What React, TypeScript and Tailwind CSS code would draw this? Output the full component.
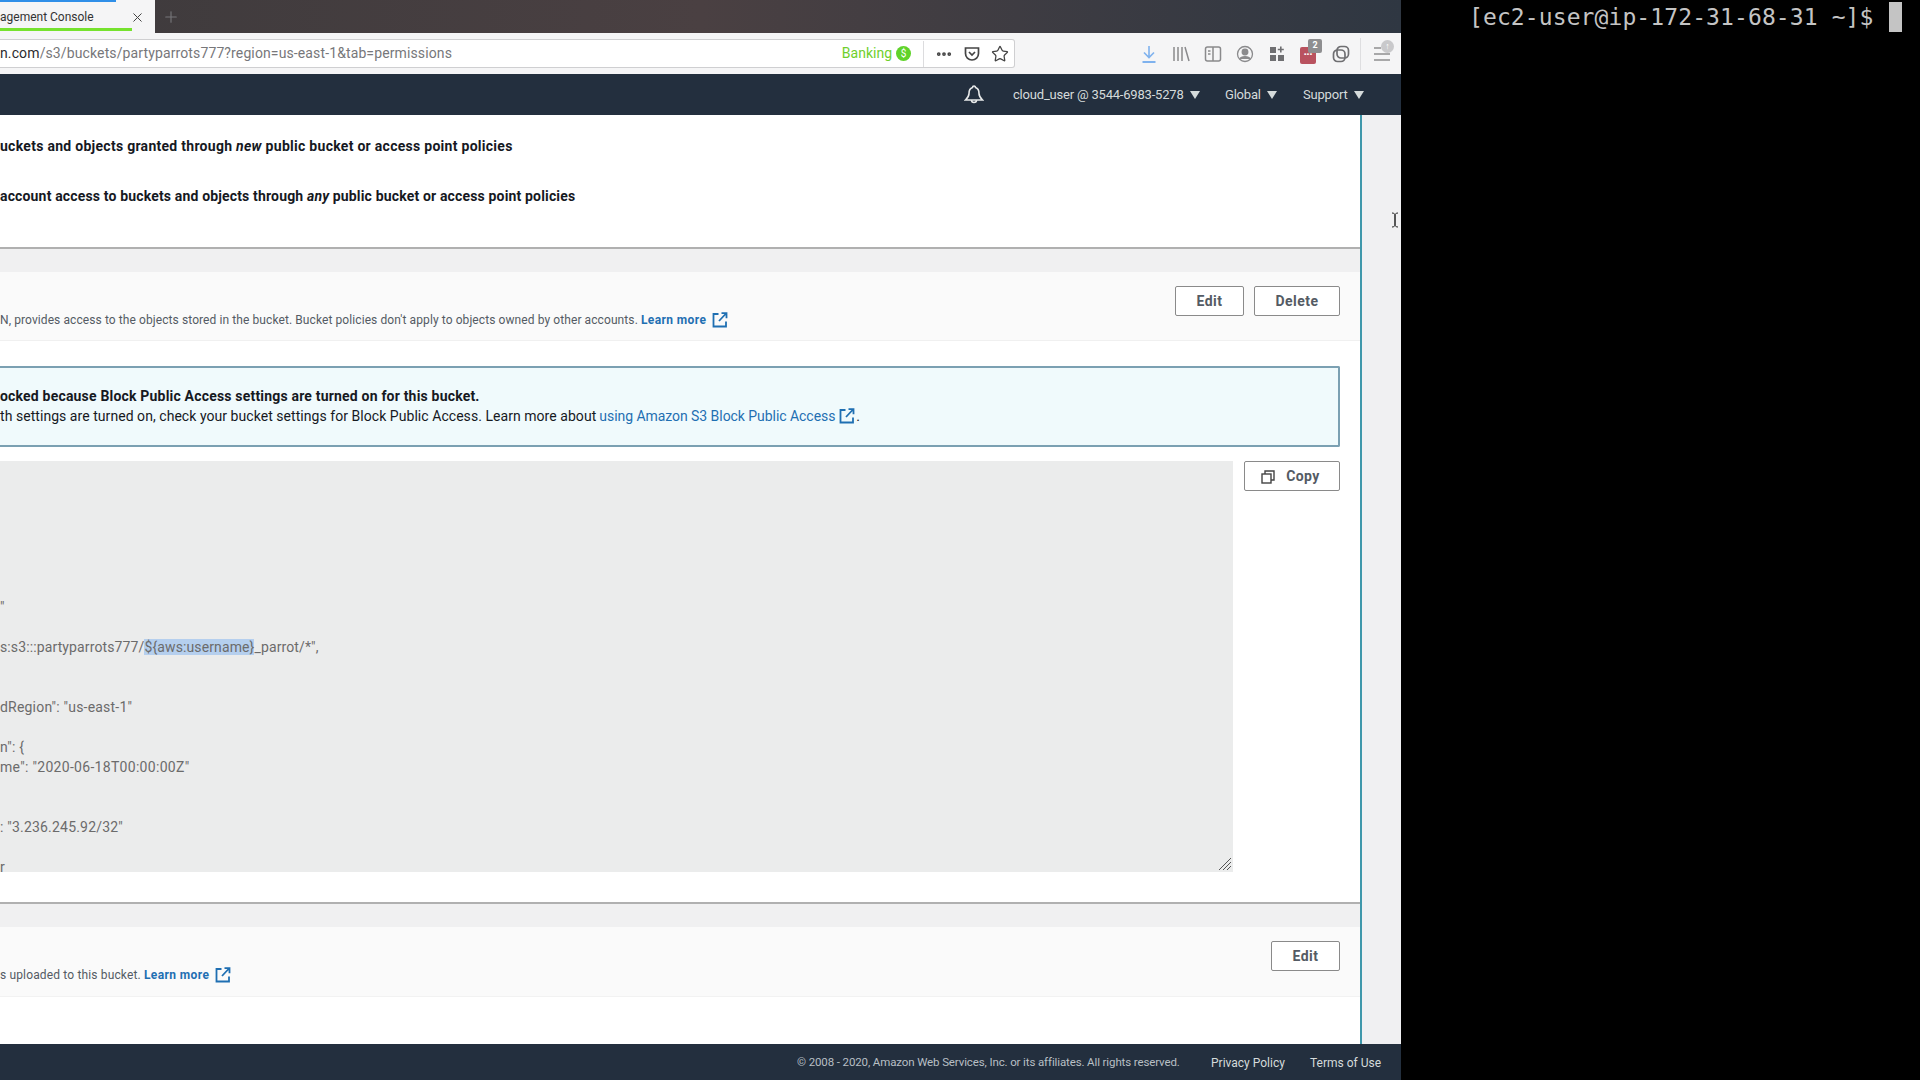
import { Plus, X, Star, Ellipsis } from 'lucide-react'

const codeLines: { [k: number]: JSX.Element | string } = {
  6: '"',
  8: (
    <span className="tracking-[0.12px]">
      s:s3:::partyparrots777/<span className="bg-[#b5cfee]">{'${aws:username}'}</span>_parrot/*",
    </span>
  ),
  11: 'dRegion": "us-east-1"',
  13: 'n": {',
  14: <span className="tracking-[0.3px]">me&quot;: &quot;2020-06-18T00:00:00Z&quot;</span>,
  17: ': "3.236.245.92/32"',
  19: 'r',
}

function OutlineButton({ label, width }: { label: string; width: string }): JSX.Element {
  return (
    <button className={`${width} h-[30px] pt-[1px] bg-white border border-[#8a8a8a] rounded-[2px] text-[14px] font-bold tracking-[0.5px] text-[#545b64]`}>
      {label}
    </button>
  )
}

function ExtLink({ className }: { className: string }): JSX.Element {
  return (
    <svg width="16" height="16" viewBox="0 0 16 16" fill="none" stroke="#1f6fb2" strokeWidth="1.8" className={className}>
      <path d="M6.500 2H1.500v12.500H14V9.500" />
      <path d="M7 9l7-7.500M9.500 1.200h5v5" />
    </svg>
  )
}

function Caret({ className }: { className: string }): JSX.Element {
  return <span className={`${className} w-0 h-0 border-x-[5px] border-x-transparent border-t-[8px] border-t-[#d5dbdb]`} />
}

function ToolbarIcons(): JSX.Element {
  return (
    <div className="ml-[124px] flex items-center text-[#8a8a8c]">
      <div className="flex items-center gap-[12px]">
        <svg width="20" height="20" viewBox="0 0 20 20" fill="none" stroke="#7fb2ee" strokeWidth="1.6">
          <path d="M10 2v11M5 8.500l5 5 5-5" />
          <path d="M3.500 18h13" strokeWidth="2" />
        </svg>
        <svg width="20" height="20" viewBox="0 0 20 20" fill="none" stroke="currentColor" strokeWidth="1.5">
          <path d="M3 3v14M7 3v14M11 3v14M14 3l4 14" />
        </svg>
        <svg width="20" height="20" viewBox="0 0 20 20" fill="none" stroke="currentColor" strokeWidth="1.5">
          <rect x="2.500" y="3" width="15" height="14" rx="2" />
          <path d="M10 3v14M5 7h2.500M5 10h2.500" />
        </svg>
        <svg width="20" height="20" viewBox="0 0 20 20" fill="none" stroke="currentColor" strokeWidth="1.3">
          <circle cx="10" cy="10" r="7.500" />
          <circle cx="10" cy="8" r="2.800" fill="currentColor" />
          <path d="M5 15c1-3 9-3 10 0" fill="currentColor" />
        </svg>
        <svg width="20" height="20" viewBox="0 0 20 20" fill="#6f6f72">
          <rect x="3" y="3" width="6" height="6" />
          <rect x="3" y="11" width="6" height="6" />
          <rect x="11" y="11" width="6" height="6" />
          <path d="M13 2.500h1.600v2.200h2.200v1.600h-2.200v2.200H13V6.300h-2.200V4.700H13z" />
        </svg>
        <div className="relative w-[20px] h-[20px]">
          <div className="absolute left-[1px] top-[3px] w-[16px] h-[17px] bg-[#b9525f] rounded-[2px] flex items-center justify-center text-[8px] font-bold leading-none text-white">
            •••
          </div>
          <div className="absolute left-[9px] top-[-5px] w-[14px] h-[14px] bg-[#8e8e90] rounded-[2px] flex items-center justify-center text-[9px] font-bold text-white">
            2
          </div>
        </div>
        <svg width="20" height="20" viewBox="0 0 20 20" fill="none" stroke="#6f6f72" strokeWidth="1.7">
          <rect x="6" y="2.500" width="11.500" height="11.500" rx="4" />
          <rect x="2.500" y="6" width="11.500" height="11.500" rx="4" />
        </svg>
      </div>
      <div className="ml-[9px] w-px h-[32px] bg-[#dedee0]" />
      <div className="relative ml-[11px] w-[20px] h-[20px]">
        <svg width="20" height="20" viewBox="0 0 20 20" fill="none" stroke="#8e8e90" strokeWidth="1.6">
          <path d="M2 4h7M2 10h16M2 16h16" />
        </svg>
        <span className="absolute left-[9px] top-[-4px] w-[13px] h-[13px] rounded-full bg-[#c9c9cb] flex items-center justify-center text-[9px] leading-none text-white">
          ↑
        </span>
      </div>
    </div>
  )
}

export default function App(): JSX.Element {
  return (
    <div className="w-[1920px] h-[1080px] flex overflow-hidden bg-black font-['Roboto',sans-serif]">
      <div className="relative w-[1401px] h-full flex flex-col overflow-hidden">
        {/* tab strip */}
        <div className="h-[33px] shrink-0 flex bg-linear-to-r from-[#3d3a3c] via-[#4a4042] to-[#2f3742]">
          <div className="relative w-[155px] h-full bg-[#f5f5f6] flex items-center">
            <div className="absolute left-0 top-0 w-[116px] h-[2px] bg-[#2f8fe8]" />
            <span className="text-[12px] text-[#333] mt-[1px]">agement Console</span>
            <X size={15} strokeWidth={1.6} className="absolute left-[130px] top-[10px] text-[#444]" />
            <div className="absolute left-0 bottom-[2px] w-[132px] h-[3px] bg-[#76e22e]" />
          </div>
          <Plus size={18} strokeWidth={1.5} className="ml-[7px] mt-[8px] text-[#77777a]" />
        </div>

        {/* url bar */}
        <div className="h-[41px] shrink-0 flex items-center bg-[#f5f5f6]">
          <div className="w-[1015px] h-[29px] shrink-0 flex items-center bg-white border border-l-0 border-[#cfcfd1] rounded-r-[3px]">
            <span className="flex-1 text-[14px] tracking-[0.12px] whitespace-nowrap text-[#77777a]">
              <span className="text-[#2c2c2e]">n.com</span>/s3/buckets/partyparrots777?region=us-east-1&amp;tab=permissions
            </span>
            <span className="text-[14px] text-[#6fcf2c]">Banking</span>
            <span className="ml-[4px] w-[15px] h-[15px] rounded-full bg-[#5fd32a] flex items-center justify-center text-[10px] text-white">
              $
            </span>
            <div className="ml-[12px] w-px h-[26px] bg-[#dcdcde]" />
            <Ellipsis size={18} strokeWidth={3} className="ml-[11px] text-[#444]" />
            <svg width="18" height="18" viewBox="0 0 18 18" fill="none" stroke="#444" strokeWidth="1.7" className="ml-[10px]">
              <path d="M2.500 3h13v5.500a6.500 6.500 0 0 1-13 0z" />
              <path d="M6 7l3 3 3-3" />
            </svg>
            <Star size={18} strokeWidth={1.7} className="ml-[10px] mr-[5px] text-[#444]" />
          </div>
          <ToolbarIcons />
        </div>

        {/* console nav */}
        <div className="h-[41px] shrink-0 flex items-center bg-[#232f3e] text-[#d5dbdb] text-[13px] tracking-[-0.2px]">
          <svg width="20" height="22" viewBox="0 0 20 22" fill="none" stroke="#e8eaea" strokeWidth="1.6" className="ml-[964px]">
            <path d="M10 2C9 2 8.500 2.700 8.500 3.500 5.500 4.500 5 7 5 9.500c0 3-2 5-3.500 6.500h17C17 14.500 15 12.500 15 9.500 15 7 14.500 4.500 11.500 3.500 11.500 2.700 11 2 10 2z" />
            <path d="M7.500 16a2.500 2.500 0 0 0 5 0" />
          </svg>
          <span className="ml-[29px] w-[170px] whitespace-nowrap">cloud_user @ 3544-6983-5278</span>
          <Caret className="ml-[7px]" />
          <span className="ml-[25px] w-[36px]">Global</span>
          <Caret className="ml-[6px]" />
          <span className="ml-[26px] w-[46px]">Support</span>
          <Caret className="ml-[5px]" />
        </div>

        {/* page body */}
        <div className="flex-1 min-h-0 flex">
          <div className="w-[1360px] flex flex-col bg-white">
            <div className="h-[132px] shrink-0 pt-[21px] flex flex-col gap-[30px] text-[14px] leading-[20px] font-bold text-[#16191f] whitespace-nowrap">
              <p className="tracking-[0.28px]">uckets and objects granted through <em>new</em> public bucket or access point policies</p>
              <p className="tracking-[0.16px]">account access to buckets and objects through <em>any</em> public bucket or access point policies</p>
            </div>

            <div className="h-[25px] shrink-0 bg-[#f0f0f1] border-t-2 border-[#b0b0b0]" />
            <div className="h-[69px] shrink-0 flex justify-between bg-[#fafafa] border-b border-[#f0f0f0] pr-[20px]">
              <p className="self-end pb-[10px] flex items-center text-[12px] leading-[20px] tracking-[0.09px] text-[#545b64] whitespace-nowrap">
                N, provides access to the objects stored in the bucket. Bucket policies don&apos;t apply to objects owned by other accounts.
                <span className="ml-[3px] font-bold tracking-[0.4px] text-[#1f6fb2]">Learn more</span>
                <ExtLink className="ml-[6px]" />
              </p>
              <div className="pt-[14px] flex gap-[10px]">
                <OutlineButton label="Edit" width="w-[69px]" />
                <OutlineButton label="Delete" width="w-[86px]" />
              </div>
            </div>

            <div className="mt-[25px] mr-[20px] h-[81px] shrink-0 pt-[20px] bg-[#f0fafc] border-y-2 border-r-2 border-[#7ba0b2] rounded-r-[2px] text-[14px] leading-[20px] text-[#16191f] whitespace-nowrap">
              <p className="-mt-[2px] font-bold tracking-[0.19px]">ocked because Block Public Access settings are turned on for this bucket.</p>
              <p className="flex items-center tracking-[0.05px]">
                th settings are turned on, check your bucket settings for Block Public Access. Learn more about
                <span className="ml-[3px] tracking-[-0.05px] text-[#1f6fb2]">using Amazon S3 Block Public Access</span>
                <ExtLink className="ml-[4px]" />
                <span className="ml-[1px]">.</span>
              </p>
            </div>

            <div className="mt-[14px] pr-[20px] flex gap-[11px] shrink-0">
              <div className="relative w-[1233px] h-[411px] pt-[16px] overflow-hidden bg-[#ebecec] text-[14px] leading-[20px] tracking-[0.2px] text-[#6b6b6b] whitespace-nowrap">
                {Array.from({ length: 20 }, (_, i) => (
                  <div key={i} className="h-[20px]">
                    {codeLines[i] ?? ''}
                  </div>
                ))}
                <svg width="14" height="14" viewBox="0 0 14 14" stroke="#555" strokeWidth="1" className="absolute right-[1px] bottom-[1px]">
                  <path d="M1 13L13 1M5 13l8-8M9 13l4-4" />
                </svg>
              </div>
              <button className="w-[96px] h-[30px] pt-[1px] pr-[3px] flex items-center justify-center gap-[11px] bg-white border border-[#8a8a8a] rounded-[2px] text-[14px] font-bold tracking-[0.4px] text-[#545b64]">
                <svg width="14" height="14" viewBox="0 0 14 14" fill="none" stroke="#444" strokeWidth="1.4">
                  <rect x="1" y="4" width="9" height="9" />
                  <path d="M4 4V1h9v9h-3" />
                </svg>
                Copy
              </button>
            </div>

            <div className="mt-[30px] h-[25px] shrink-0 bg-[#f0f0f1] border-t-2 border-[#b0b0b0]" />
            <div className="h-[70px] shrink-0 flex justify-between bg-[#fafafa] border-b border-[#f2f2f2] pr-[20px]">
              <p className="self-end pb-[11px] flex items-center text-[12px] leading-[20px] tracking-[0.15px] text-[#545b64] whitespace-nowrap">
                s uploaded to this bucket.
                <span className="ml-[3px] font-bold tracking-[0.4px] text-[#1f6fb2]">Learn more</span>
                <ExtLink className="ml-[6px]" />
              </p>
              <div className="pt-[14px]">
                <OutlineButton label="Edit" width="w-[69px]" />
              </div>
            </div>
            <div className="flex-1" />
          </div>
          <div className="w-[2px] bg-[#3f97ab]" />
          <div className="flex-1 bg-[#f0f0f2]" />
        </div>

        {/* footer */}
        <div className="h-[36px] shrink-0 pt-[1px] flex items-center bg-[#232f3e] text-[12px] text-[#d5dbdb] whitespace-nowrap">
          <span className="ml-[797px] w-[384px] text-[11.5px] tracking-[-0.12px] text-[#b8bfc4]">© 2008 - 2020, Amazon Web Services, Inc. or its affiliates. All rights reserved.</span>
          <span className="ml-[30px] w-[74px]">Privacy Policy</span>
          <span className="ml-[25px]">Terms of Use</span>
        </div>

        {/* text cursor */}
        <svg width="8" height="16" viewBox="0 0 8 16" fill="none" stroke="#222" strokeWidth="1" className="absolute left-[1391px] top-[212px]">
          <path d="M1 1c2 0 3 1 3 2v10c0 1-1 2-3 2M7 1c-2 0-3 1-3 2v10c0 1 1 2 3 2" />
        </svg>
      </div>

      {/* terminal */}
      <div className="flex-1 flex items-start pl-[68px] text-[23px] leading-[34px] tracking-[0.1px] font-['DejaVu_Sans_Mono',monospace] text-[#c4c4c4] whitespace-nowrap">
        <span>[ec2-user@ip-172-31-68-31 ~]$</span>
        <span className="ml-[16px] mt-[2px] w-[13px] h-[30px] bg-[#c4c4c4]" />
      </div>
    </div>
  )
}
